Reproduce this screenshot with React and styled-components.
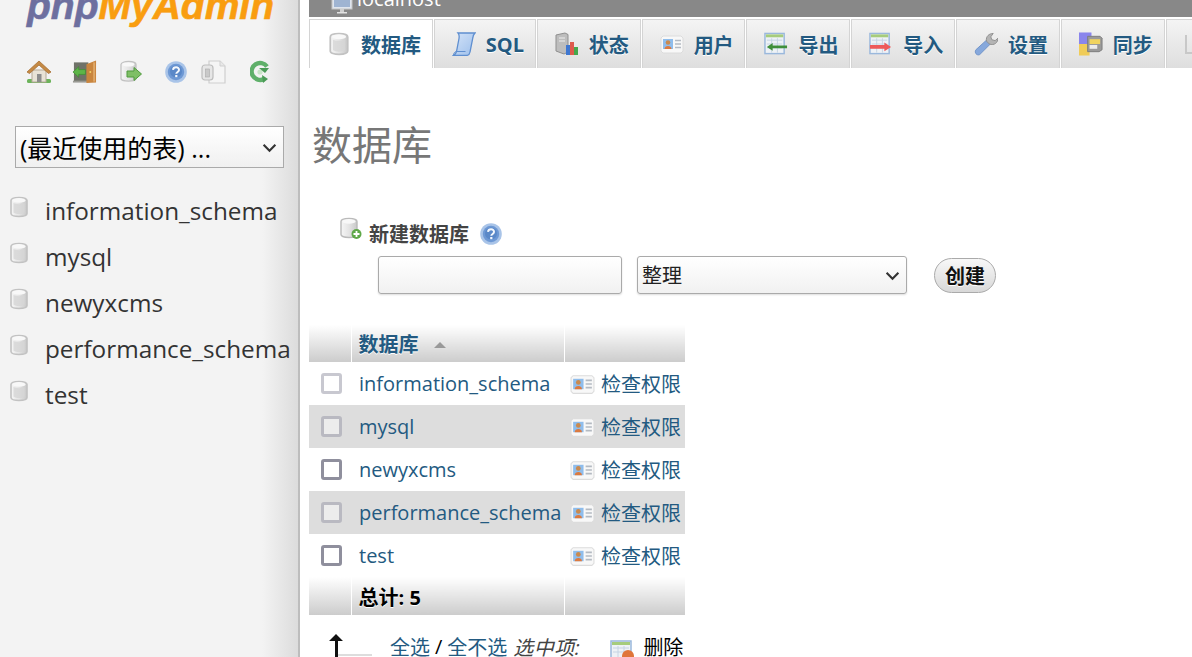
import styled, { createGlobalStyle } from "styled-components";

const font = `"Open Sans", "Noto Sans CJK SC", sans-serif`;

const chevron = (size) =>
    `url("data:image/svg+xml,%3Csvg xmlns='http://www.w3.org/2000/svg' width='${size}' height='${size}' viewBox='0 0 14 14'%3E%3Cpath d='M1.500 4.500 7 10l5.500-5.500' fill='none' stroke='%23333' stroke-width='2'/%3E%3C/svg%3E")`;

const GlobalStyle = createGlobalStyle`
    html, body {
        margin: 0;
        height: 100%;
        overflow: hidden;
        background: #fff;
        font-family: ${font};
    }
`;

function Defs() {
    return (
        <HiddenSvg>
            <defs>
                <linearGradient id="cyl" x1="0" x2="1" y1="0" y2="0">
                    <stop offset="0" stopColor="#f6f6f6" />
                    <stop offset="0.5" stopColor="#e4e4e4" />
                    <stop offset="1" stopColor="#c8c8c8" />
                </linearGradient>
                <linearGradient id="scroll" x1="0" x2="1" y1="0" y2="1">
                    <stop offset="0" stopColor="#d4e3f8" />
                    <stop offset="1" stopColor="#9dbfeb" />
                </linearGradient>
            </defs>
        </HiddenSvg>
    );
}

function DbIcon({ w = 18, h = 22 }) {
    return (
        <svg width={w} height={h} viewBox="0 0 18 22">
            <path d="M1 4.500C1 .5 17 .5 17 4.500v13c0 4-16 4-16 0z" fill="url(#cyl)" stroke="#c2c2c2" strokeWidth="1.600" />
            <path d="M3.500 7c3 1.500 8 1.500 11 0v9.500c-3 2-8 2-11 0z" fill="#d6d6d6" opacity="0.8" />
            <ellipse cx="9" cy="4.400" rx="6.500" ry="2.300" fill="#f8f8f8" />
        </svg>
    );
}

function HelpIcon() {
    return (
        <svg width="22" height="22" viewBox="0 0 22 22">
            <circle cx="11" cy="11" r="10.800" fill="#a9c4e8" />
            <circle cx="11" cy="11" r="8.200" fill="#6d98d4" />
            <circle cx="11" cy="10.500" r="6" fill="#5a88c8" />
            <path d="M8 8.800c.4-3.400 6.200-3.200 6 .2-.1 2-2.600 1.900-2.700 3.800" fill="none" stroke="#f4f8fd" strokeWidth="2" />
            <rect x="10.200" y="14" width="2.200" height="2.200" fill="#f4f8fd" />
        </svg>
    );
}

function HomeIcon() {
    return (
        <svg width="26" height="24" viewBox="0 0 26 24">
            <rect x="1" y="19" width="24" height="4" rx="1.500" fill="#6cb35a" />
            <rect x="6" y="10" width="14" height="12" fill="#e8e2d6" stroke="#b5aa98" />
            <rect x="11" y="14" width="4.500" height="8" fill="#8c8c8c" />
            <path d="M1 12 13 1l12 11-2.500 1.500L13 5 3.500 13.500z" fill="#c58a45" stroke="#a87034" strokeWidth="0.800" />
        </svg>
    );
}

function LogoutIcon() {
    return (
        <svg width="25" height="24" viewBox="0 0 26 24">
            <rect x="2" y="2" width="15" height="20" fill="#6f7268" />
            <rect x="1" y="21" width="16" height="2" fill="#9a9a94" />
            <path d="M15 4 25 0v23l-10 .5z" fill="#c9853e" />
            <rect x="22" y="2" width="2" height="20" fill="#dfa868" />
            <circle cx="19" cy="12" r="1" fill="#f0d46a" />
            <path d="M1 12 7 6.500V9.500h7v5H7v3z" fill="#5db548" stroke="#3d8a30" strokeWidth="0.700" />
        </svg>
    );
}

function DbArrowIcon() {
    return (
        <svg width="22" height="24" viewBox="0 0 22 24">
            <path d="M1 4.500C1 .5 16 .5 16 4.500v14c0 3.500-15 3.500-15 0z" fill="url(#cyl)" stroke="#c2c2c2" strokeWidth="1.300" />
            <ellipse cx="8.500" cy="4.400" rx="6" ry="2.200" fill="#f8f8f8" />
            <path d="M7 11h7V7.500l7.500 6.500-7.500 6.500V17H7z" fill="#7fbf66" stroke="#4f9a3c" />
        </svg>
    );
}

function DocsIcon() {
    return (
        <svg width="25" height="24" viewBox="0 0 25 24">
            <path d="M8 1h11l5 5v17H8z" fill="#f5f5f5" stroke="#cfcfcf" strokeWidth="1.200" />
            <path d="M19 1v5h5" fill="#e8e8e8" stroke="#cfcfcf" />
            <rect x="1" y="5" width="11" height="15" rx="3" fill="#e6e6e6" stroke="#bdbdbd" strokeWidth="1.200" />
            <rect x="4.500" y="9" width="4" height="8" fill="#c9c9c9" stroke="#aaa" strokeWidth="0.600" />
        </svg>
    );
}

function ReloadIcon() {
    return (
        <svg width="20" height="24" viewBox="0 0 20 24">
            <path d="M17 6.500A8.500 8.500 0 1 0 14 19" fill="none" stroke="#5fb06a" strokeWidth="4.400" />
            <circle cx="10" cy="12" r="2.600" fill="#c8e6c8" />
            <path d="M9 8h10l-4 5z" fill="#4b9b57" />
            <path d="M12 15l6 4-5 4z" fill="#4b9b57" />
        </svg>
    );
}

function MonitorIcon() {
    return (
        <svg width="22" height="17" viewBox="0 0 22 17">
            <rect x="1" y="-8" width="20" height="17" fill="#dfe5ee" stroke="#c4c4c4" />
            <rect x="3" y="-6" width="16" height="13" fill="#9fb4d2" />
            <rect x="9" y="9" width="4" height="3" fill="#cfcfcf" />
            <rect x="6" y="12" width="10" height="1.500" fill="#e2e2e2" />
        </svg>
    );
}

function SqlIcon() {
    return (
        <svg width="24" height="24" viewBox="0 0 24 24">
            <path d="M6 1h17c-1.600 1.500-2 3-2.200 5L18 20c-.4 2.400-2 3.500-4 3.500H1.500c1.800-1 2.500-2 3-4L7 6.500C7.400 4 7.200 2.300 6 1z" fill="url(#scroll)" stroke="#5f8fd0" strokeWidth="1.300" />
            <path d="M1.500 23.500c0-2.500 1.500-4 3-4h9" fill="none" stroke="#5f8fd0" />
        </svg>
    );
}

function StatusIcon() {
    return (
        <svg width="24" height="24" viewBox="0 0 24 24">
            <path d="M1 3l9-2 3 1.500V20l-4 2-8-3z" fill="#bdbdbd" stroke="#8f8f8f" />
            <path d="M4 6h6M4 9h6" stroke="#eee" strokeWidth="1.200" />
            <rect x="11" y="13" width="4" height="10" fill="#3f77d0" />
            <rect x="15" y="10" width="4" height="13" fill="#dd5a4c" />
            <rect x="19" y="15" width="4" height="8" fill="#45a84c" />
        </svg>
    );
}

function UserCardIcon({ w = 24, h = 20 }) {
    return (
        <svg width={w} height={h} viewBox="0 0 24 20">
            <path d="M3 2h18l2 2v13l-2 2H3l-2-2V4z" fill="#f8f8f8" stroke="#dcdcdc" />
            <rect x="3" y="5" width="10" height="10" fill="#8fbdec" />
            <circle cx="8" cy="8.500" r="2.300" fill="#c98a50" />
            <path d="M4.500 15c0-4 7-4 7 0z" fill="#db7a40" />
            <path d="M15 6.500h6M15 10h6M15 13.500h6" stroke="#b4bac2" strokeWidth="1.500" />
        </svg>
    );
}

function TableArrowIcon({ color = "#3f8f3a", dir = "left" }) {
    return (
        <svg width="25" height="24" viewBox="0 0 25 24">
            <rect x="1" y="1" width="20" height="21" fill="#eef2f6" stroke="#9ab8dc" strokeWidth="1.500" />
            <rect x="2" y="2" width="18" height="3" fill="#a6cc7c" />
            <path d="M3 8h16M3 12h16M3 16h16M8 6v15M14 6v15" stroke="#c6d4e4" />
            {dir === "left" ? (
                <path d="M3 15l6-4v2.500h15v3H9V19z" fill={color} />
            ) : (
                <path d="M1 13h15v-2.500l7 4.500-7 4.500V17H1z" fill={color} />
            )}
        </svg>
    );
}

function WrenchIcon() {
    return (
        <svg width="25" height="24" viewBox="0 0 25 24">
            <path d="M2 18 13 8l4 4L6 23c-3 1.500-6-2-4-5z" fill="#86a8dc" stroke="#6f92c8" />
            <path d="M13 9c-1-5 3-8 7-8l-2.500 3.500 1 3 3.500 1L25 6c0 4.500-4 8-9 6z" fill="#b4b4b4" stroke="#8e8e8e" />
        </svg>
    );
}

function SyncIcon() {
    return (
        <svg width="25" height="24" viewBox="0 0 25 24">
            <rect x="0" y="0" width="13" height="12" fill="#8a85ec" />
            <rect x="0" y="12" width="11" height="12" fill="#f0cc58" />
            <path d="M9 4h13l2 2v12l-3 2H9z" fill="#9a9a9a" stroke="#7c7c7c" />
            <rect x="11" y="7" width="11" height="5" fill="#f0d460" />
            <rect x="11" y="13" width="8" height="4" fill="#ececec" />
        </svg>
    );
}

function MoreIcon() {
    return (
        <svg width="24" height="24" viewBox="0 0 24 24">
            <path d="M2 3v18h14" fill="none" stroke="#c8c8c8" strokeWidth="2" />
        </svg>
    );
}

function DbPlusIcon() {
    return (
        <svg width="23" height="24" viewBox="0 0 23 24">
            <path d="M1 4.500C1 .5 17 .5 17 4.500v13c0 4-16 4-16 0z" fill="url(#cyl)" stroke="#bababa" strokeWidth="1.400" />
            <ellipse cx="9" cy="4.400" rx="6.500" ry="2.300" fill="#f8f8f8" />
            <circle cx="16.500" cy="17" r="5" fill="#5fa848" />
            <path d="M13.500 17h6M16.500 14v6" stroke="#fff" strokeWidth="1.800" />
        </svg>
    );
}

function TopArrowIcon() {
    return (
        <svg width="45" height="24" viewBox="0 0 45 24">
            <path d="M9 0l7 7h-5v17H8V7H2z" fill="#111" />
            <path d="M11 21h34" stroke="#bbb" strokeWidth="1.200" />
        </svg>
    );
}

function DeleteIcon() {
    return (
        <svg width="25" height="24" viewBox="0 0 25 24">
            <rect x="1" y="1" width="20" height="21" fill="#eef2f6" stroke="#9ab8dc" strokeWidth="1.500" />
            <rect x="2" y="2" width="18" height="3" fill="#a6cc7c" />
            <path d="M3 8h16M3 12h16M8 6v15M14 6v15" stroke="#c6d4e4" />
            <circle cx="18" cy="16" r="6" fill="#e0763a" />
        </svg>
    );
}

const tabs = [
    { label: "数据库", icon: <DbIcon w={20} h={24} />, active: true },
    { label: "SQL", icon: <SqlIcon /> },
    { label: "状态", icon: <StatusIcon /> },
    { label: "用户", icon: <UserCardIcon /> },
    { label: "导出", icon: <TableArrowIcon /> },
    { label: "导入", icon: <TableArrowIcon color="#ee5a5a" dir="right" /> },
    { label: "设置", icon: <WrenchIcon /> },
    { label: "同步", icon: <SyncIcon /> },
    { label: "更多", icon: <MoreIcon /> },
];

const databases = ["information_schema", "mysql", "newyxcms", "performance_schema", "test"];

function App() {
    return (
        <Page>
            <GlobalStyle />
            <Defs />
            <Sidebar>
                <LogoClip>
                    <Logo><Php>php</Php><My>MyAdmin</My></Logo>
                </LogoClip>
                <IconBar>
                    <HomeIcon />
                    <LogoutIcon />
                    <DbArrowIcon />
                    <HelpIcon />
                    <DocsIcon />
                    <ReloadIcon />
                </IconBar>
                <RecentSelect defaultValue="recent">
                    <option value="recent">(最近使用的表) ...</option>
                </RecentSelect>
                <DbList>
                    {databases.map((name) => (
                        <DbItem key={name}>
                            <DbIcon />
                            <DbName>{name}</DbName>
                        </DbItem>
                    ))}
                </DbList>
            </Sidebar>

            <Main>
                <ServerBar>
                    <MonitorIcon />
                    <ServerText>localhost</ServerText>
                </ServerBar>
                <Tabs>
                    {tabs.map((tab) => (
                        <Tab key={tab.label} $active={tab.active}>
                            <TabIcon>{tab.icon}</TabIcon>
                            {tab.label}
                        </Tab>
                    ))}
                </Tabs>

                <Title>数据库</Title>

                <CreateHead>
                    <DbPlusIcon />
                    <CreateLabel>新建数据库</CreateLabel>
                    <HelpIcon />
                </CreateHead>
                <CreateRow>
                    <NameInput />
                    <CollationSelect defaultValue="none">
                        <option value="none">整理</option>
                    </CollationSelect>
                    <CreateButton>创建</CreateButton>
                </CreateRow>

                <DbTable>
                    <colgroup>
                        <col width="42" />
                        <col width="213" />
                        <col width="121" />
                    </colgroup>
                    <thead>
                        <tr>
                            <HeadCell />
                            <HeadCell>数据库<SortMark /></HeadCell>
                            <HeadCell />
                        </tr>
                    </thead>
                    <tbody>
                        {databases.map((name, i) => (
                            <Row key={name} $even={i % 2 === 1}>
                                <CheckCell>
                                    <Check type="checkbox" $faded={i < 2 || i === 3} $even={i % 2 === 1} />
                                </CheckCell>
                                <NameCell>{name}</NameCell>
                                <ActionCell>
                                    <ActionInner>
                                        <UserCardIcon w={25} h={22} />
                                        检查权限
                                    </ActionInner>
                                </ActionCell>
                            </Row>
                        ))}
                    </tbody>
                    <tfoot>
                        <tr>
                            <FootCell />
                            <FootCell>总计: 5</FootCell>
                            <FootCell />
                        </tr>
                    </tfoot>
                </DbTable>

                <BulkRow>
                    <TopArrowIcon />
                    <BulkLink>全选</BulkLink>
                    <span>/</span>
                    <BulkLink>全不选</BulkLink>
                    <BulkNote>选中项:</BulkNote>
                    <DeleteIcon />
                    <DeleteText>删除</DeleteText>
                </BulkRow>
            </Main>
        </Page>
    );
}

export default App;

const HiddenSvg = styled.svg`
    position: absolute;
    width: 0;
    height: 0;
`;

const Page = styled.div`
    display: flex;
    height: 100vh;
    overflow: hidden;
`;

const Sidebar = styled.aside`
    flex: 0 0 298px;
    display: flex;
    flex-direction: column;
    background: linear-gradient(to right, #f3f3f3 88%, #dcdcdc 100%);
    border-right: 2px solid #bdbdbd;
`;

const LogoClip = styled.div`
    height: 28px;
    overflow: hidden;
    padding-left: 27px;
`;

const Logo = styled.div`
    margin-top: -17px;
    font-family: "Liberation Sans", sans-serif;
    font-size: 39px;
    line-height: 46px;
    font-weight: 700;
    font-style: italic;
    white-space: nowrap;
    -webkit-text-stroke: 0.6px currentColor;
`;

const Php = styled.span`
    color: #6d6f9f;
`;

const My = styled.span`
    color: #f99d10;
`;

const IconBar = styled.div`
    display: grid;
    grid-template-columns: 46px 48px 45px 36px 49px auto;
    align-items: center;
    margin: 32px 0 0 26px;
    height: 24px;
`;

const RecentSelect = styled.select`
    appearance: none;
    margin: 42px 0 0 15px;
    width: 269px;
    height: 42px;
    padding: 2px 4px 0;
    font-family: ${font};
    font-size: 25px;
    color: #000;
    border: 1px solid #aaa;
    border-radius: 0;
    background: ${chevron(15)} no-repeat right 6px center, linear-gradient(#ffffff, #f0f0f0);
`;

const DbList = styled.ul`
    list-style: none;
    margin: 20px 0 0;
    padding: 0;
`;

const DbItem = styled.li`
    display: flex;
    align-items: center;
    gap: 17px;
    height: 46px;
    padding-left: 10px;
    svg {
        margin-top: -8px;
    }
`;

const DbName = styled.span`
    margin-top: -2px;
    font-size: 24.3px;
    color: #333;
    white-space: nowrap;
`;

const Main = styled.main`
    flex: 1;
    min-width: 0;
    padding-left: 9px;
    overflow: hidden;
`;

const ServerBar = styled.div`
    display: flex;
    gap: 4px;
    height: 17px;
    background: #888;
    overflow: hidden;
    padding-left: 22px;
`;

const ServerText = styled.div`
    margin-top: -13px;
    font-size: 20px;
    line-height: 24px;
    color: #fff;
`;

const Tabs = styled.nav`
    display: flex;
    gap: 1px;
    margin-top: 2px;
    height: 49px;
`;

const Tab = styled.a`
    flex: none;
    display: flex;
    align-items: center;
    gap: 10px;
    padding: 0 10.8px 0 17px;
    font-size: 20px;
    font-weight: 700;
    color: #235a81;
    text-shadow: 0 1px 0 #fff;
    border: 1px solid #d4d4d4;
    border-bottom: none;
    box-sizing: border-box;
    background: ${(p) => (p.$active ? "#fff" : "linear-gradient(#f4f4f4, #dedede)")};
`;

const TabIcon = styled.span`
    display: flex;
    justify-content: center;
    width: 24px;
`;

const Title = styled.h1`
    margin: 48px 0 0 3px;
    font-size: 40px;
    line-height: 58px;
    font-weight: 400;
    color: #777;
`;

const CreateHead = styled.div`
    display: flex;
    align-items: center;
    margin: 42px 0 0 31px;
    height: 34px;
    > svg:first-child {
        margin-top: -8px;
    }
    > svg:last-child {
        margin-top: 2px;
    }
`;

const CreateLabel = styled.span`
    margin: 0 11px 0 6px;
    font-size: 20px;
    font-weight: 700;
    color: #444;
    text-shadow: 0 1px 0 #fff;
`;

const CreateRow = styled.div`
    display: flex;
    align-items: center;
    margin: 6px 0 0 69px;
`;

const NameInput = styled.input`
    width: 244px;
    height: 38px;
    box-sizing: border-box;
    border: 1px solid #aaa;
    border-radius: 3px;
    background: linear-gradient(#fff, #f1f1f1);
    box-shadow: 0 1px 2px #ddd;
`;

const CollationSelect = styled.select`
    appearance: none;
    margin-left: 15px;
    width: 270px;
    height: 38px;
    padding: 0 4px;
    font-family: ${font};
    font-size: 20px;
    color: #222;
    border: 1px solid #aaa;
    border-radius: 3px;
    background: ${chevron(15)} no-repeat right 6px center, linear-gradient(#fff, #f1f1f1);
    box-shadow: 0 1px 2px #ddd;
`;

const CreateButton = styled.button`
    margin-left: 27px;
    width: 62px;
    height: 35px;
    padding: 0;
    font-family: ${font};
    font-size: 20px;
    font-weight: 700;
    color: #111;
    border: 1px solid #aaa;
    border-radius: 18px;
    background: linear-gradient(#f8f8f8, #d8d8d8);
    text-shadow: 0 1px 0 #fff;
`;

const DbTable = styled.table`
    margin-top: 31px;
    width: 376px;
    table-layout: fixed;
    border-collapse: collapse;
    font-size: 20px;
`;

const HeadCell = styled.th`
    height: 37px;
    padding: 0 0 0 7px;
    text-align: left;
    font-size: 20px;
    font-weight: 700;
    color: #235a81;
    text-shadow: 0 1px 0 #fff;
    white-space: nowrap;
    background: linear-gradient(#ffffff, #cccccc);
    border-left: 1px solid #fff;
    &:first-child {
        border-left: none;
    }
`;

const SortMark = styled.span`
    display: inline-block;
    margin: 0 0 4px 15px;
    border-left: 6px solid transparent;
    border-right: 6px solid transparent;
    border-bottom: 6px solid #999;
`;

const Row = styled.tr`
    height: 43px;
    background: ${(p) => (p.$even ? "#dddddd" : "#ffffff")};
`;

const CheckCell = styled.td`
    padding: 0 0 0 12px;
`;

const Check = styled.input`
    appearance: none;
    display: block;
    width: 21px;
    height: 21px;
    margin: 0;
    box-sizing: border-box;
    border-radius: 3px;
    border: 3px solid ${(p) => (p.$even ? "#b9b9c1" : p.$faded ? "#c8c8d0" : "#8f8f9d")};
    background: ${(p) => (p.$even ? "#ececec" : "#fff")};
`;

const NameCell = styled.td`
    padding: 0 0 0 8px;
    color: #235a81;
    white-space: nowrap;
`;

const ActionCell = styled.td`
    padding: 0 0 0 6px;
    color: #235a81;
    white-space: nowrap;
`;

const ActionInner = styled.span`
    display: flex;
    align-items: center;
    gap: 6px;
    font-size: 20px;
`;

const FootCell = styled(HeadCell).attrs({ as: "th" })`
    height: 38px;
    color: #000;
`;

const BulkRow = styled.div`
    display: flex;
    align-items: center;
    margin: 16px 0 0 18px;
    height: 30px;
    font-size: 20px;
    white-space: nowrap;
    > svg:first-child {
        margin-right: 18px;
    }
    > span {
        margin: 0 5px;
    }
    > svg:nth-of-type(2) {
        margin: 12px 3px 0 30px;
    }
`;

const BulkLink = styled.a`
    color: #235a81;
`;

const BulkNote = styled.em`
    margin-left: 6px;
    color: #444;
    letter-spacing: 0.5px;
`;

const DeleteText = styled.span`
    margin-left: 7px;
    color: #000;
`;
